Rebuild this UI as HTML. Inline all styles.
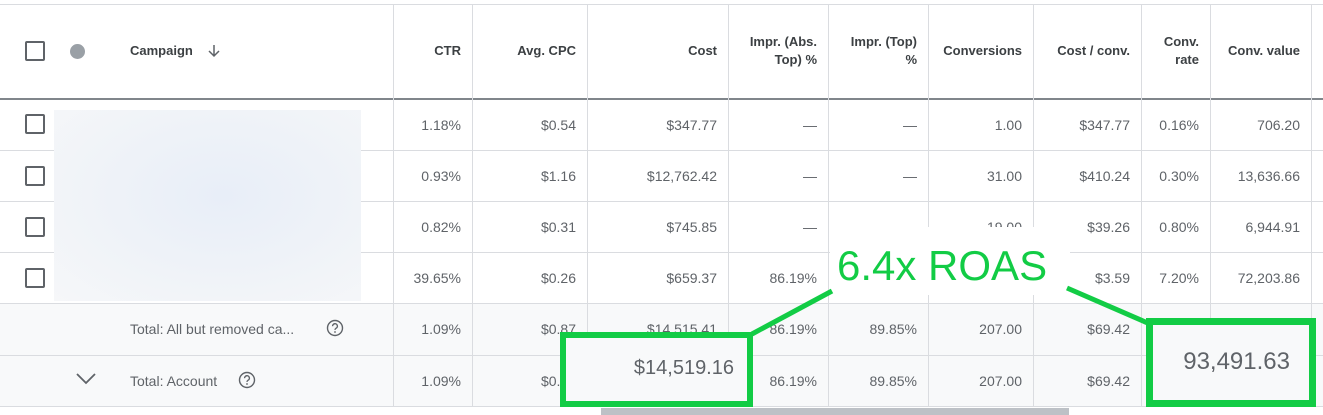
<!DOCTYPE html>
<html><head><meta charset="utf-8"><style>
*{margin:0;padding:0;box-sizing:border-box}
body{width:1323px;height:415px;overflow:hidden;background:#fff;font-family:"Liberation Sans",Arial,sans-serif;position:relative;color:#5f6368}
.a{position:absolute}
.hl{position:absolute;left:0;width:1323px;height:1px;background:#dadce0}
.vl{position:absolute;width:1px;background:#dadce0;top:4px;height:402px}
.t{position:absolute;font-size:14px;text-align:right;white-space:nowrap;line-height:16px}
.h{position:absolute;font-size:13px;font-weight:bold;color:#3c4043;text-align:right;line-height:18px}
.cb{position:absolute;left:25px;width:20px;height:20px;border:2px solid #5f6368;border-radius:2px;background:#fff}
</style></head><body>
<div class="a" style="left:0;top:304px;width:1323px;height:102px;background:#f8f9fa"></div>
<div class="hl" style="top:4px"></div>
<div class="a" style="left:0;top:98px;width:1323px;height:2px;background:#80868b"></div>
<div class="hl" style="top:150px"></div>
<div class="hl" style="top:201px"></div>
<div class="hl" style="top:252px"></div>
<div class="hl" style="top:303px"></div>
<div class="hl" style="top:355px"></div>
<div class="hl" style="top:406px"></div>
<div class="vl" style="left:393px"></div>
<div class="vl" style="left:472px"></div>
<div class="vl" style="left:587px"></div>
<div class="vl" style="left:728px"></div>
<div class="vl" style="left:828px"></div>
<div class="vl" style="left:928px"></div>
<div class="vl" style="left:1033px"></div>
<div class="vl" style="left:1141px"></div>
<div class="vl" style="left:1210px"></div>
<div class="vl" style="left:1311px"></div>

<div class="cb" style="top:41px"></div>
<div class="a" style="left:70px;top:44px;width:15px;height:15px;border-radius:50%;background:#9aa0a6"></div>
<div class="h" style="left:130px;top:42px;text-align:left">Campaign</div>
<svg class="a" style="left:206px;top:43px" width="16" height="16" viewBox="0 0 16 16"><path d="M8 2v11M3 8l5 5 5-5" fill="none" stroke="#5f6368" stroke-width="1.5"/></svg>
<div class="h" style="left:393px;width:68px;top:42px">CTR</div>
<div class="h" style="left:472px;width:104px;top:42px">Avg. CPC</div>
<div class="h" style="left:587px;width:130px;top:42px">Cost</div>
<div class="h" style="left:728px;width:89px;top:33px">Impr. (Abs.<br>Top) %</div>
<div class="h" style="left:828px;width:89px;top:33px">Impr. (Top)<br>%</div>
<div class="h" style="left:928px;width:94px;top:42px">Conversions</div>
<div class="h" style="left:1033px;width:97px;top:42px">Cost / conv.</div>
<div class="h" style="left:1141px;width:58px;top:33px">Conv.<br>rate</div>
<div class="h" style="left:1210px;width:90px;top:42px">Conv. value</div>

<div class="cb" style="top:114px"></div>
<div class="cb" style="top:166px"></div>
<div class="cb" style="top:217px"></div>
<div class="cb" style="top:268px"></div>
<div class="a" style="left:54px;top:110px;width:307px;height:191px;background:radial-gradient(ellipse at 55% 45%,#e8eef8 0%,#eef2f8 45%,#f6f7f9 100%)"></div>

<div class="t" style="left:393px;width:68px;top:117px">1.18%</div>
<div class="t" style="left:472px;width:104px;top:117px">$0.54</div>
<div class="t" style="left:587px;width:130px;top:117px">$347.77</div>
<div class="t" style="left:728px;width:89px;top:117px">—</div>
<div class="t" style="left:828px;width:89px;top:117px">—</div>
<div class="t" style="left:928px;width:94px;top:117px">1.00</div>
<div class="t" style="left:1033px;width:97px;top:117px">$347.77</div>
<div class="t" style="left:1141px;width:58px;top:117px">0.16%</div>
<div class="t" style="left:1210px;width:90px;top:117px">706.20</div>

<div class="t" style="left:393px;width:68px;top:168px">0.93%</div>
<div class="t" style="left:472px;width:104px;top:168px">$1.16</div>
<div class="t" style="left:587px;width:130px;top:168px">$12,762.42</div>
<div class="t" style="left:728px;width:89px;top:168px">—</div>
<div class="t" style="left:828px;width:89px;top:168px">—</div>
<div class="t" style="left:928px;width:94px;top:168px">31.00</div>
<div class="t" style="left:1033px;width:97px;top:168px">$410.24</div>
<div class="t" style="left:1141px;width:58px;top:168px">0.30%</div>
<div class="t" style="left:1210px;width:90px;top:168px">13,636.66</div>

<div class="t" style="left:393px;width:68px;top:219px">0.82%</div>
<div class="t" style="left:472px;width:104px;top:219px">$0.31</div>
<div class="t" style="left:587px;width:130px;top:219px">$745.85</div>
<div class="t" style="left:728px;width:89px;top:219px">—</div>
<div class="t" style="left:828px;width:89px;top:219px">—</div>
<div class="t" style="left:928px;width:94px;top:219px">19.00</div>
<div class="t" style="left:1033px;width:97px;top:219px">$39.26</div>
<div class="t" style="left:1141px;width:58px;top:219px">0.80%</div>
<div class="t" style="left:1210px;width:90px;top:219px">6,944.91</div>

<div class="t" style="left:393px;width:68px;top:270px">39.65%</div>
<div class="t" style="left:472px;width:104px;top:270px">$0.26</div>
<div class="t" style="left:587px;width:130px;top:270px">$659.37</div>
<div class="t" style="left:728px;width:89px;top:270px">86.19%</div>
<div class="t" style="left:1033px;width:97px;top:270px">$3.59</div>
<div class="t" style="left:1141px;width:58px;top:270px">7.20%</div>
<div class="t" style="left:1210px;width:90px;top:270px">72,203.86</div>

<div class="t" style="left:130px;top:321px;text-align:left">Total: All but removed ca...</div>
<svg class="a" style="left:326px;top:319px" width="18" height="18" viewBox="0 0 18 18"><circle cx="9" cy="9" r="7.5" fill="none" stroke="#5f6368" stroke-width="1.4"/><path d="M6.6 7.2a2.4 2.4 0 1 1 3.4 2.1c-.7.4-1 .8-1 1.6" fill="none" stroke="#5f6368" stroke-width="1.4"/><circle cx="9" cy="13" r=".9" fill="#5f6368"/></svg>
<div class="t" style="left:393px;width:68px;top:321px">1.09%</div>
<div class="t" style="left:472px;width:104px;top:321px">$0.87</div>
<div class="t" style="left:587px;width:130px;top:321px">$14,515.41</div>
<div class="t" style="left:728px;width:89px;top:321px">86.19%</div>
<div class="t" style="left:828px;width:89px;top:321px">89.85%</div>
<div class="t" style="left:928px;width:94px;top:321px">207.00</div>
<div class="t" style="left:1033px;width:97px;top:321px">$69.42</div>

<svg class="a" style="left:76px;top:373px" width="20" height="12" viewBox="0 0 20 12"><path d="M1 1l9 9 9-9" fill="none" stroke="#5f6368" stroke-width="1.8"/></svg>
<div class="t" style="left:130px;top:373px;text-align:left">Total: Account</div>
<svg class="a" style="left:238px;top:371px" width="18" height="18" viewBox="0 0 18 18"><circle cx="9" cy="9" r="7.5" fill="none" stroke="#5f6368" stroke-width="1.4"/><path d="M6.6 7.2a2.4 2.4 0 1 1 3.4 2.1c-.7.4-1 .8-1 1.6" fill="none" stroke="#5f6368" stroke-width="1.4"/><circle cx="9" cy="13" r=".9" fill="#5f6368"/></svg>
<div class="t" style="left:393px;width:68px;top:373px">1.09%</div>
<div class="t" style="left:472px;width:104px;top:373px">$0.87</div>
<div class="t" style="left:728px;width:89px;top:373px">86.19%</div>
<div class="t" style="left:828px;width:89px;top:373px">89.85%</div>
<div class="t" style="left:928px;width:94px;top:373px">207.00</div>
<div class="t" style="left:1033px;width:97px;top:373px">$69.42</div>

<div class="a" style="left:601px;top:408px;width:468px;height:7px;background:#bdc1c6"></div>

<div class="a" style="left:560px;top:332px;width:193px;height:75px;border:6px solid #12cc45;background:#f8f9fa"></div>
<div class="t" style="left:566px;width:168px;top:357px;font-size:20px;line-height:22px">$14,519.16</div>
<div class="a" style="left:1146px;top:318px;width:170px;height:89px;border:7px solid #12cc45;background:#f8f9fa"></div>
<div class="t" style="left:1153px;width:137px;top:349px;font-size:24px;line-height:26px">93,491.63</div>
<div class="a" style="left:830px;top:227px;width:240px;height:68px;background:#fff"></div>
<div class="a" style="left:837px;top:241px;font-size:42px;line-height:50px;color:#12cc45;white-space:nowrap">6.4x ROAS</div>
<svg class="a" style="left:0;top:0" width="1323" height="415"><path d="M832 291L752 334M1067 288L1150 324" stroke="#12cc45" stroke-width="5" fill="none"/></svg>
</body></html>
